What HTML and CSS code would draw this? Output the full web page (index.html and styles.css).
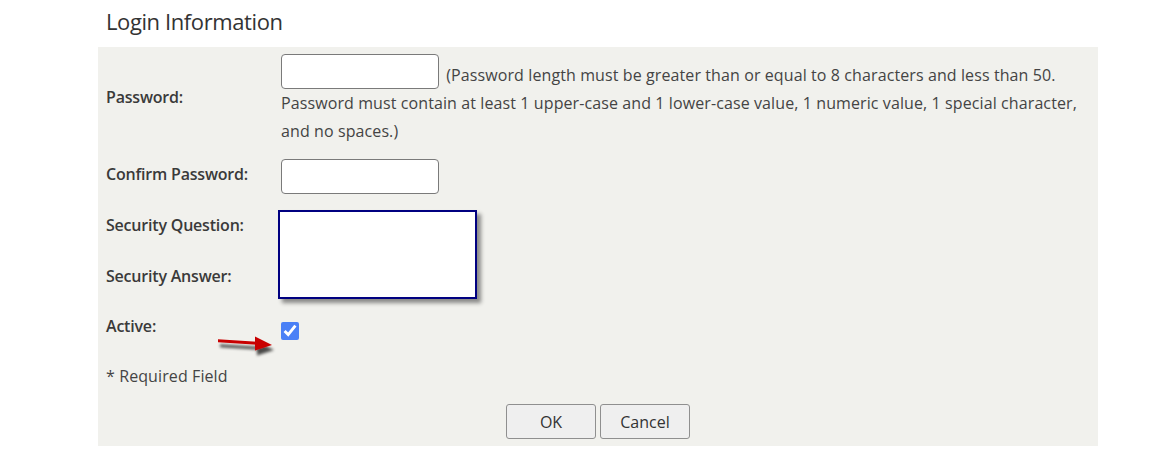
FILE: index.html
```html
<!DOCTYPE html>
<html lang="en">
<head>
    <meta charset="UTF-8">
    <title>Login Information</title>
    <link rel="stylesheet" href="styles.css">
</head>
<body>
    <div class="page">
        <h2 class="section-title">Login Information</h2>

        <form class="panel">
            <div class="grid">
                <label class="field-label" for="pwd">Password:</label>
                <div class="field field-password">
                    <input type="password" id="pwd" class="text-input">
                    <span class="hint">(Password length must be greater than or equal to 8 characters and less than 50. Password must contain at least 1 upper-case and 1 lower-case value, 1 numeric value, 1 special character, and no spaces.)</span>
                </div>

                <label class="field-label" for="pwd2">Confirm Password:</label>
                <div class="field field-confirm">
                    <input type="password" id="pwd2" class="text-input">
                </div>

                <label class="field-label">Security Question:</label>
                <!-- redacted block covers both security inputs -->
                <div class="redacted"></div>

                <label class="field-label">Security Answer:</label>

                <label class="field-label" for="active">Active:</label>
                <div class="field field-check">
                    <!-- annotation arrow pointing at the checkbox -->
                    <svg class="arrow" width="64" height="26" viewBox="0 0 64 26">
                        <defs>
                            <filter id="shade" x="-20%" y="-50%" width="150%" height="220%">
                                <feGaussianBlur in="SourceAlpha" stdDeviation="1.8"/>
                                <feOffset dx="2" dy="5" result="blur"/>
                                <feComponentTransfer><feFuncA type="linear" slope="0.7"/></feComponentTransfer>
                                <feMerge><feMergeNode/><feMergeNode in="SourceGraphic"/></feMerge>
                            </filter>
                        </defs>
                        <g filter="url(#shade)">
                            <path d="M1 4.3 L40 6.8 L40 9.8 L1 7.3 Z" fill="#c80000"/>
                            <path d="M38 1.5 L55 10 L38 15.5 Z" fill="#c80000"/>
                        </g>
                    </svg>
                    <input type="checkbox" id="active" class="check" checked>
                </div>

                <div class="required">* Required Field</div>
            </div>

            <div class="actions">
                <button type="button" class="btn">OK</button>
                <button type="button" class="btn">Cancel</button>
            </div>
        </form>
    </div>
</body>
</html>
```

FILE: styles.css
```css
*, *::before, *::after {
    box-sizing: border-box;
}

body {
    margin: 0;
    background: #fff;
    color: #333;
    font-family: 'Open Sans', 'Noto Sans', sans-serif;
    font-size: 16px;
    letter-spacing: 0.1px;
}

.page {
    width: 1000px;
    margin-left: 98px;
}

.section-title {
    margin: 0;
    padding: 6px 8px 0;
    height: 47px;
    font-size: 22px;
    font-weight: 500;
    letter-spacing: -0.4px;
    color: #333;
}

.panel {
    background: #f1f1ed;
    padding: 0 8px 7px;
}

/* label column + field column, rows sized to the original form table */
.grid {
    display: grid;
    grid-template-columns: 175px 1fr;
    grid-template-rows: 99px 56px 46px 56px 44px 56px;
}

.field-label {
    display: flex;
    align-items: center;
    font-weight: 600;
    letter-spacing: -0.2px;
    color: #3a3a3a;
}

.field-password {
    padding-top: 7px;
    line-height: 28px;
    color: #444;
}

.text-input {
    width: 158px;
    height: 35px;
    margin: 0;
    border: 1px solid #7a7a7a;
    border-radius: 4px;
    background: #fff;
}

.field-password .text-input {
    vertical-align: bottom;
}

.hint {
    margin-left: 3px;
}

.field-confirm {
    padding-top: 13px;
}

.field-confirm .text-input {
    display: block;
}

.redacted {
    grid-row: span 2;
    width: 199px;
    height: 89px;
    margin: 8px 0 0 -3px;
    border: 2px solid #000080;
    background: #fff;
    box-shadow: 4px 4px 4px #8a8a88;
}

.field-check {
    position: relative;
    padding-top: 18px;
}

.check {
    display: block;
    width: 18px;
    height: 18px;
    margin: 0;
    accent-color: #4a80f6;
}

.arrow {
    position: absolute;
    left: -64px;
    top: 31px;
}

.required {
    grid-column: 1 / span 2;
    display: flex;
    align-items: center;
    color: #444;
}

.actions {
    display: flex;
    justify-content: center;
    gap: 4px;
}

.btn {
    width: 90px;
    height: 35px;
    border: 1px solid #8f8f8f;
    border-radius: 3px;
    background: #efefef;
    color: #333;
    font: inherit;
}
```
